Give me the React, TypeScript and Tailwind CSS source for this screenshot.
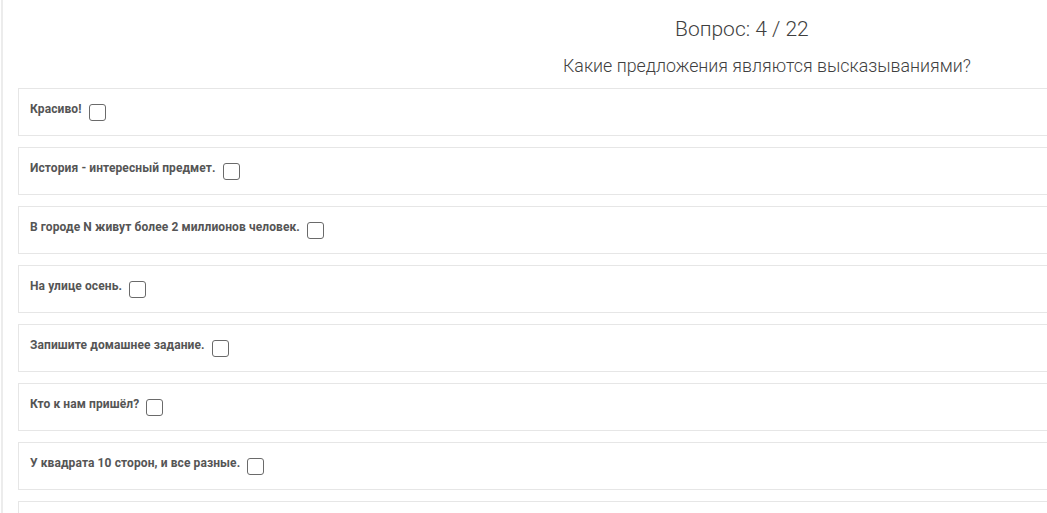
const OPTIONS = [
  'Красиво!',
  'История - интересный предмет.',
  'В городе N живут более 2 миллионов человек.',
  'На улице осень.',
  'Запишите домашнее задание.',
  'Кто к нам пришёл?',
  'У квадрата 10 сторон, и все разные.',
  '',
]

export default function App() {
  return (
    <div className="h-[513px] w-[1047px] overflow-hidden bg-white" style={{ fontFamily: 'Roboto, "Noto Sans", sans-serif' }}>
      <div className="ml-[1px] h-full border-l-2 border-[#ececec] pl-[15px]">
        <div className="pt-[15px]">
          <h2 className="pl-[657px] text-[21px] leading-[28px] font-light text-[#3f3f3f]">Вопрос: 4 / 22</h2>
          <p className="mt-[12px] pl-[545px] text-[17.8px] leading-[22px] font-light text-[#3f3f3f]">
            Какие предложения являются высказываниями?
          </p>
        </div>
        <div className="mt-[11px] flex w-[1100px] flex-col gap-[11px]">
          {OPTIONS.map((label, i) => (
            <label
              key={i}
              className="flex h-[48px] items-start gap-[7px] border border-[#e6e6e6] px-[11px] pt-[12px]"
            >
              {label && (
                <>
                  <span className="text-[12px] leading-[16px] font-bold tracking-[0.1px] text-[#555]">{label}</span>
                  <span className="mt-[3px] h-[17px] w-[17px] rounded-[3px] border border-[#6a6a6a] bg-white" />
                </>
              )}
            </label>
          ))}
        </div>
      </div>
    </div>
  )
}
